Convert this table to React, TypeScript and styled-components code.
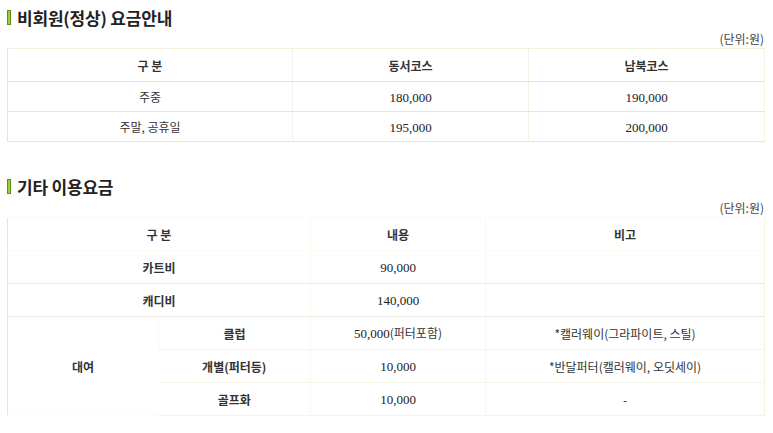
import React from "react";
import styled, { createGlobalStyle } from "styled-components";

const GlobalStyle = createGlobalStyle`
  body {
    margin: 0;
    background: #fff;
    font-family: "Liberation Sans", "Noto Sans CJK KR", sans-serif;
    color: #333;
  }
`;

const Page = styled.div`
  width: 757px;
  padding: 0 9px 0 7px;
`;

const Section = styled.section<{ $top?: number }>`
  margin-top: ${(p) => p.$top ?? 0}px;
`;

const Title = styled.h2`
  display: flex;
  align-items: center;
  gap: 6px;
  height: 30px;
  margin: 0;
  padding-top: 2px;
  font-family: "Noto Sans CJK KR", sans-serif;
  font-size: 17px;
  font-weight: 700;
  color: #222;
  letter-spacing: -0.2px;
`;

const Bar = styled.span`
  display: inline-block;
  width: 2px;
  height: 13px;
  background: #9ccd3a;
  border: 1px solid #5e8f1c;
`;

const Unit = styled.div`
  height: 14px;
  line-height: 14px;
  text-align: right;
  font-size: 12px;
  color: #444;
  font-family: "Noto Sans CJK KR", sans-serif;
`;

const Table = styled.table<{ $edge: string }>`
  width: 757px;
  border-collapse: collapse;
  table-layout: fixed;
  margin-top: 2px;
  border-top: 1px solid ${(p) => p.$edge};
  border-left: 1px solid #e4e4dc;
  border-right: 1px solid #f6f4e2;
`;

const Cell = styled.td<{ $h: number; $line: string; $col: string; $bold?: boolean }>`
  height: ${(p) => p.$h}px;
  padding: 0;
  text-align: center;
  vertical-align: middle;
  font-size: 12px;
  font-weight: ${(p) => (p.$bold ? 700 : 400)};
  font-family: "Noto Sans CJK KR", sans-serif;
  color: #333;
  border-bottom: 1px solid ${(p) => p.$line};
  border-left: 1px solid ${(p) => p.$col};
  &:first-child {
    border-left: none;
  }
`;

const Num = styled.span`
  font-family: "Liberation Serif", "Noto Sans CJK KR", serif;
  font-size: 13px;
  color: #222;
`;

const fees = [
  { label: "주중", east: "180,000", south: "190,000" },
  { label: "주말, 공휴일", east: "195,000", south: "200,000" },
];

const rentals = [
  { item: "클럽", price: "50,000", extra: "(퍼터포함)", note: "*캘러웨이(그라파이트, 스틸)" },
  { item: "개별(퍼터등)", price: "10,000", extra: "", note: "*반달퍼터(캘러웨이, 오딧세이)" },
  { item: "골프화", price: "10,000", extra: "", note: "-" },
];

const L1 = "#e7e5da";
const C1 = "#f2f1e3";
const L2 = "#f6f4e6";
const C2 = "#f9f8ee";

const App = () => (
  <>
    <GlobalStyle />
    <Page>
      <Section>
        <Title>
          <Bar />
          비회원(정상) 요금안내
        </Title>
        <Unit>(단위:원)</Unit>
        <Table $edge="#f3f1dc">
          <colgroup>
            <col style={{ width: 285 }} />
            <col style={{ width: 236 }} />
            <col style={{ width: 236 }} />
          </colgroup>
          <tbody>
            <tr>
              <Cell as="th" $h={32} $line={L1} $col={C1} $bold>구 분</Cell>
              <Cell as="th" $h={32} $line={L1} $col={C1} $bold>동서코스</Cell>
              <Cell as="th" $h={32} $line={L1} $col={C1} $bold>남북코스</Cell>
            </tr>
            {fees.map((f) => (
              <tr key={f.label}>
                <Cell $h={29} $line={L1} $col={C1}>{f.label}</Cell>
                <Cell $h={29} $line={L1} $col={C1}><Num>{f.east}</Num></Cell>
                <Cell $h={29} $line={L1} $col={C1}><Num>{f.south}</Num></Cell>
              </tr>
            ))}
          </tbody>
        </Table>
      </Section>

      <Section $top={27}>
        <Title>
          <Bar />
          기타 이용요금
        </Title>
        <Unit>(단위:원)</Unit>
        <Table $edge="#fbfaee">
          <colgroup>
            <col style={{ width: 151 }} />
            <col style={{ width: 152 }} />
            <col style={{ width: 175 }} />
            <col style={{ width: 279 }} />
          </colgroup>
          <tbody>
            <tr>
              <Cell as="th" colSpan={2} $h={32} $line="#fcfbef" $col={C2} $bold>구 분</Cell>
              <Cell as="th" $h={32} $line="#fcfbef" $col={C2} $bold>내용</Cell>
              <Cell as="th" $h={32} $line="#fcfbef" $col={C2} $bold>비고</Cell>
            </tr>
            <tr>
              <Cell colSpan={2} $h={32} $line="#ebe9df" $col={C2} $bold>카트비</Cell>
              <Cell $h={32} $line="#ebe9df" $col={C2}><Num>90,000</Num></Cell>
              <Cell $h={32} $line="#ebe9df" $col={C2}></Cell>
            </tr>
            <tr>
              <Cell colSpan={2} $h={32} $line="#ebe9df" $col={C2} $bold>캐디비</Cell>
              <Cell $h={32} $line="#ebe9df" $col={C2}><Num>140,000</Num></Cell>
              <Cell $h={32} $line="#ebe9df" $col={C2}></Cell>
            </tr>
            {rentals.map((r, i) => (
              <tr key={r.item}>
                {i === 0 && (
                  <Cell rowSpan={3} $h={32} $line="#fdfdf6" $col={C2} $bold>대여</Cell>
                )}
                <Cell $h={32} $line={L2} $col={C2} $bold>{r.item}</Cell>
                <Cell $h={32} $line={L2} $col={C2}>
                  <Num>{r.price}</Num>
                  {r.extra}
                </Cell>
                <Cell $h={32} $line={L2} $col={C2}>{r.note}</Cell>
              </tr>
            ))}
          </tbody>
        </Table>
      </Section>
    </Page>
  </>
);

export default App;
